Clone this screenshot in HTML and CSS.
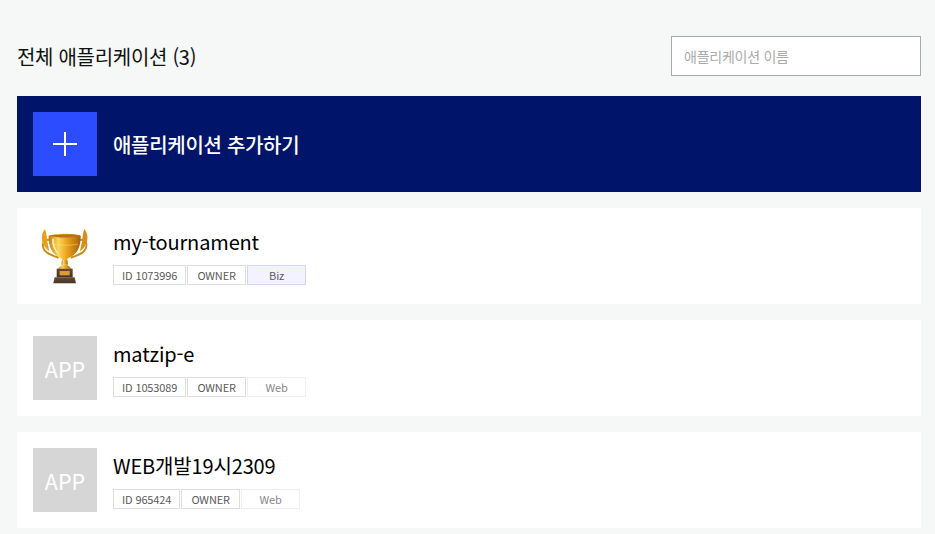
FILE: index.html
```html
<!DOCTYPE html>
<html lang="ko">

<head>
    <meta charset="UTF-8">
    <meta name="viewport" content="width=device-width, initial-scale=1.0">
    <title>전체 애플리케이션</title>
    <link rel="stylesheet" href="styles.css">
</head>

<body>
    <div class="container">
        <div class="head">
            <h2 class="head-title">전체 애플리케이션 (3)</h2>
            <input class="search" type="text" placeholder="애플리케이션 이름">
        </div>

        <a class="add-app" href="#">
            <span class="add-icon">
                <svg width="24" height="24" viewBox="0 0 24 24">
                    <path d="M0 12H24M12 0V24" stroke="#fff" stroke-width="2" fill="none" />
                </svg>
            </span>
            <strong class="add-text">애플리케이션 추가하기</strong>
        </a>

        <ul class="app-list">
            <li class="app">
                <div class="thumb">
                    <svg width="64" height="64" viewBox="9 12 192 192">
                        <defs>
                            <linearGradient id="gold" x1="0" y1="0" x2="1" y2="0">
                                <stop offset="0" stop-color="#c07a10" />
                                <stop offset="0.3" stop-color="#fcd75c" />
                                <stop offset="0.55" stop-color="#eda81f" />
                                <stop offset="1" stop-color="#a85f08" />
                            </linearGradient>
                            <linearGradient id="plinth" x1="0" y1="0" x2="0" y2="1">
                                <stop offset="0" stop-color="#6d4a2c" />
                                <stop offset="1" stop-color="#3d342f" />
                            </linearGradient>
                        </defs>
                        <!-- 손잡이 -->
                        <path d="M58 60C34 56 34 84 50 97C62 106 72 109 86 113" stroke="#d08a18" stroke-width="6" fill="none" />
                        <path d="M150 60C174 56 174 84 158 97C146 106 136 109 122 113" stroke="#d08a18" stroke-width="6" fill="none" />
                        <!-- 잎 장식 -->
                        <path d="M45 27C34 40 33 58 40 72C44 80 50 88 58 94C56 82 54 74 52 66C50 54 51 42 45 27Z" fill="#e8a021" />
                        <path d="M163 27C174 40 175 58 168 72C164 80 158 88 150 94C152 82 154 74 156 66C158 54 157 42 163 27Z" fill="#d88e18" />
                        <!-- 컵 -->
                        <path d="M56 47C74 39 134 39 152 47C153 76 144 100 123 110C116 113 112 116 110 120H98C96 116 92 113 85 110C64 100 55 76 56 47Z" fill="url(#gold)" />
                        <path d="M59 47C76 42 132 42 149 47C132 54 76 54 59 47Z" fill="#b87310" />
                        <path d="M64 72C84 77 124 77 144 72" stroke="#fbe08a" stroke-width="1.500" fill="none" />
                        <path d="M72 56C72 76 78 94 90 104C78 100 66 84 66 56Z" fill="#ffedab" />
                        <!-- 받침 -->
                        <path d="M96 120H112L114 134H94Z" fill="url(#gold)" />
                        <path d="M84 146C90 138 96 134 104 134C112 134 118 138 124 146Z" fill="url(#gold)" />
                        <path d="M80 146H128V172H80Z" fill="url(#plinth)" />
                        <path d="M89 153H119V166H89Z" fill="#d89d33" />
                        <path d="M74 172H134L138 190H70Z" fill="url(#plinth)" />
                    </svg>
                </div>
                <div class="info">
                    <h3 class="app-name">my-tournament</h3>
                    <div class="tags">
                        <span class="tag">ID 1073996</span>
                        <span class="tag">OWNER</span>
                        <span class="tag tag-biz">Biz</span>
                    </div>
                </div>
            </li>
            <li class="app">
                <div class="thumb thumb-empty">APP</div>
                <div class="info">
                    <h3 class="app-name">matzip-e</h3>
                    <div class="tags">
                        <span class="tag">ID 1053089</span>
                        <span class="tag">OWNER</span>
                        <span class="tag tag-web">Web</span>
                    </div>
                </div>
            </li>
            <li class="app">
                <div class="thumb thumb-empty">APP</div>
                <div class="info">
                    <h3 class="app-name">WEB개발19시2309</h3>
                    <div class="tags">
                        <span class="tag">ID 965424</span>
                        <span class="tag">OWNER</span>
                        <span class="tag tag-web">Web</span>
                    </div>
                </div>
            </li>
        </ul>
    </div>
</body>

</html>
```

FILE: styles.css
```css
* {
    list-style: none;
    margin: 0;
    padding: 0;
    box-sizing: border-box;
}

body {
    background-color: #f6f8f8;
    font-family: "Noto Sans CJK KR", "Noto Sans", sans-serif;
    color: #111;
}

.container {
    padding: 36px 14px 0 17px;
}

.head {
    display: flex;
    justify-content: space-between;
    align-items: center;
    height: 40px;
    margin-bottom: 20px;
}

.head-title {
    font-size: 20px;
    font-weight: 400;
    color: #111;
    letter-spacing: -0.3px;
}

.search {
    width: 250px;
    height: 40px;
    border: 1px solid #aaa;
    background-color: #fff;
    padding: 0 12px;
    font-family: inherit;
    font-size: 14px;
    letter-spacing: -0.25px;
    outline: none;
}

.search::placeholder {
    color: #aaa;
}

.add-app {
    display: flex;
    align-items: center;
    gap: 16px;
    height: 96px;
    padding: 0 16px;
    background-color: #001569;
    text-decoration: none;
}

.add-icon {
    display: flex;
    align-items: center;
    justify-content: center;
    width: 64px;
    height: 64px;
    background-color: #2b4cff;
}

.add-text {
    font-size: 20px;
    font-weight: 500;
    letter-spacing: -0.3px;
    color: #fff;
}

.app {
    display: flex;
    align-items: center;
    gap: 16px;
    height: 96px;
    margin-top: 16px;
    padding: 0 16px;
    background-color: #fff;
}

.thumb {
    display: flex;
    align-items: center;
    justify-content: center;
    width: 64px;
    height: 64px;
}

.thumb-empty {
    background-color: #d6d6d6;
    color: #fff;
    font-size: 21.5px;
}

.app-name {
    font-size: 20px;
    font-weight: 400;
    line-height: 30px;
    letter-spacing: -0.15px;
    color: #000;
}

.tags {
    display: flex;
    gap: 1px;
    margin-top: 8px;
}

.tag {
    min-width: 59px;
    height: 20px;
    padding: 0 8px;
    border: 1px solid #ddd;
    font-size: 11px;
    letter-spacing: -0.15px;
    line-height: 18px;
    text-align: center;
    color: #5a5a5a;
}

.tag-biz {
    background-color: #f3f3ff;
    border-color: #d2d6f8;
}

.tag-web {
    border-color: #eee;
    color: #888;
}
```
